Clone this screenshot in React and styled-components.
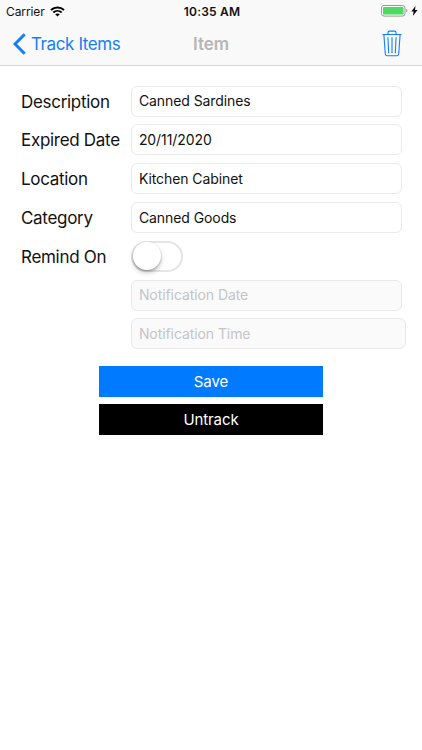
import React from 'react';
import styled, { createGlobalStyle } from 'styled-components';

const GlobalStyle = createGlobalStyle`
  * {
    box-sizing: border-box;
  }

  body {
    margin: 0;
    background-color: #fff;
    font-family: Inter, 'Liberation Sans', sans-serif;
  }
`;

const Screen = styled.div`
  display: flex;
  flex-direction: column;
  width: 422px;
  height: 750px;
  overflow: hidden;
  background-color: #fff;
  color: #111;
`;

const Header = styled.header`
  height: 66px;
  background-color: #f9f9f9;
  border-bottom: 1px solid #d5d5d6;
`;

const StatusBar = styled.div`
  display: grid;
  grid-template-columns: 1fr auto 1fr;
  align-items: center;
  height: 22px;
  padding: 0 4px 0 6px;
`;

const Carrier = styled.div`
  display: flex;
  align-items: center;
  gap: 5px;
  font-size: 12px;
  letter-spacing: -0.1px;
`;

const Clock = styled.div`
  font-size: 12px;
  font-weight: 600;
  letter-spacing: 0.2px;
`;

const Power = styled.div`
  display: flex;
  justify-content: flex-end;
  align-items: center;
  gap: 3px;
`;

const NavBar = styled.nav`
  display: grid;
  grid-template-columns: 1fr auto 1fr;
  align-items: center;
  height: 43px;
`;

const BackLink = styled.span`
  display: flex;
  align-items: center;
  gap: 5px;
  padding-left: 13px;
  color: #157efb;
  font-size: 17px;
  letter-spacing: -0.4px;
  cursor: pointer;
`;

const Title = styled.span`
  color: #b5b5b5;
  font-size: 17px;
  font-weight: 600;
`;

const Trash = styled.span`
  display: flex;
  justify-content: flex-end;
  padding-right: 20px;
  cursor: pointer;
`;

const Form = styled.form`
  display: flex;
  flex-direction: column;
  gap: 7.8px;
  padding: 19.7px 16px 0 21px;
`;

const Row = styled.div`
  display: grid;
  grid-template-columns: 110.4px 1fr;
  align-items: center;
  height: 31px;
`;

const Label = styled.label`
  padding-top: 1px;
  font-size: 17px;
  letter-spacing: -0.3px;
  white-space: nowrap;
`;

const Field = styled.input`
  grid-column: 2;
  width: ${props => (props.$wide ? 274.5 : 270.5)}px;
  height: 31px;
  margin: 0;
  padding: 0 6.5px 1px;
  border: 1px solid #e9e9e9;
  border-radius: 6px;
  outline: none;
  background-color: #fff;
  color: #111;
  font-family: inherit;
  font-size: 14px;
  letter-spacing: -0.08px;

  &:disabled {
    background-color: #fafafa;
  }

  &::placeholder {
    color: #c4c4c8;
    opacity: 1;
  }
`;

const Switch = styled.span`
  display: flex;
  align-items: center;
  width: 52px;
  height: 31px;
  border: 2px solid #e5e5e5;
  border-radius: 16px;
`;

const Knob = styled.span`
  width: 28px;
  height: 28px;
  flex: none;
  border-radius: 50%;
  background-color: #fff;
  box-shadow: 0 3px 5px rgba(0, 0, 0, 0.2), 0 1px 2px rgba(0, 0, 0, 0.28);
`;

const Actions = styled.div`
  display: flex;
  flex-direction: column;
  align-items: center;
  gap: 7.8px;
  padding-top: 16.4px;
`;

const Button = styled.button`
  width: 224px;
  height: 30.7px;
  padding: 0;
  border: none;
  background-color: ${props => props.$color};
  color: #fff;
  font-family: inherit;
  font-size: 15px;
  letter-spacing: -0.1px;
  cursor: pointer;
`;

const WifiIcon = () => (
  <svg width="15" height="11" viewBox="0 0 15 11" fill="none">
    <path d="M1 4.1C4.7.7 10.3.7 14 4.1" stroke="#000" strokeWidth="2" />
    <path d="M3.3 6.5c2.4-2.2 6-2.2 8.4 0" stroke="#000" strokeWidth="1.9" />
    <path d="M7.5 10.6 5.2 8.3c1.3-1.2 3.3-1.2 4.6 0z" fill="#000" />
  </svg>
);

const BatteryIcon = () => (
  <svg width="27" height="12" viewBox="0 0 27 12" fill="none">
    <rect x=".5" y=".5" width="23.5" height="10.6" rx="2.5" stroke="#999" />
    <rect x="2" y="2" width="20.5" height="7.6" rx="1.2" fill="#4cd964" />
    <path d="M25.2 4c1.7.8 1.7 2.8 0 3.6z" fill="#999" />
  </svg>
);

const BoltIcon = () => (
  <svg width="7" height="10" viewBox="0 0 7 10">
    <path d="M4.5 0 .4 5.4h2.3L1.8 10 6.6 4H4z" fill="#000" />
  </svg>
);

const ChevronIcon = () => (
  <svg width="13" height="22" viewBox="0 0 13 22" fill="none">
    <path d="M11.7 1.2 2 11l9.7 9.8" stroke="#157efb" strokeWidth="3" />
  </svg>
);

const TrashIcon = () => (
  <svg width="20" height="27" viewBox="0 0 20 27" fill="none" stroke="#157efb" strokeWidth="1.1">
    <path d="M.5 4.5h19" />
    <path d="M6 4.3V2.5c0-.9.5-1.4 1.4-1.4h5.2c.9 0 1.4.5 1.4 1.4v1.8" />
    <path d="M1.9 4.7 3.3 24c.1 1.1.8 1.8 1.9 1.8h9.6c1.1 0 1.8-.7 1.9-1.8L18.1 4.7" />
    <path d="m5.9 7.2.8 16M10 7.2v16M14.1 7.2l-.8 16" />
  </svg>
);

const fields = [
  { label: 'Description', value: 'Canned Sardines' },
  { label: 'Expired Date', value: '20/11/2020' },
  { label: 'Location', value: 'Kitchen Cabinet' },
  { label: 'Category', value: 'Canned Goods' },
];

const App = () => {
  return (
    <Screen>
      <GlobalStyle />
      <Header>
        <StatusBar>
          <Carrier>Carrier<WifiIcon /></Carrier>
          <Clock>10:35 AM</Clock>
          <Power><BatteryIcon /><BoltIcon /></Power>
        </StatusBar>
        <NavBar>
          <BackLink><ChevronIcon />Track Items</BackLink>
          <Title>Item</Title>
          <Trash><TrashIcon /></Trash>
        </NavBar>
      </Header>
      <Form>
        {fields.map(field => (
          <Row key={field.label}>
            <Label>{field.label}</Label>
            <Field defaultValue={field.value} />
          </Row>
        ))}
        <Row>
          <Label>Remind On</Label>
          <Switch><Knob /></Switch>
        </Row>
        <Row><Field placeholder="Notification Date" disabled /></Row>
        <Row><Field placeholder="Notification Time" disabled $wide /></Row>
      </Form>
      <Actions>
        <Button $color="#007aff">Save</Button>
        <Button $color="#000">Untrack</Button>
      </Actions>
    </Screen>
  )
}

export default App;
